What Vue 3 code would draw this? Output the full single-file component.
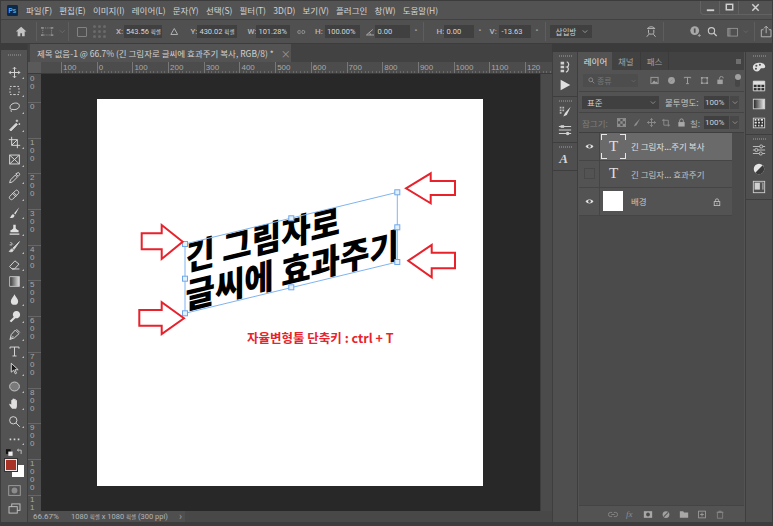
<template>
  <div class="window">
    <header class="menubar">
      <svg class="ps-logo" viewBox="0 0 12 12"><rect width="12" height="12" rx="1.5" fill="#0b2a4a" /><text x="1.6" y="9" class="ps-text">Ps</text></svg>
      <span v-for="item in menus" :key="item" class="menu-item">{{ item }}</span>
      <div class="win-buttons">
        <span class="win-btn"><svg viewBox="0 0 12 12"><rect x="2" y="8" width="8" height="2" fill="#d0d0d0" /></svg></span>
        <span class="win-btn"><svg viewBox="0 0 12 12"><rect x="2.5" y="2.5" width="7" height="6" fill="none" stroke="#d0d0d0" stroke-width="1.6" /></svg></span>
        <span class="win-btn wide"><svg viewBox="0 0 12 12"><path d="M2.5 2.5l7 7M9.5 2.5l-7 7" stroke="#d0d0d0" stroke-width="1.6" /></svg></span>
      </div>
    </header>

    <section class="options">
      <svg class="opt-home" viewBox="0 0 14 14"><path d="M7 1.5L1 7h2v5.5h3V9h2v3.5h3V7h2z" fill="#c4c4c4" /></svg>
      <i class="divider home-div"></i>
      <svg class="opt-transform" viewBox="0 0 14 12"><rect x="2" y="2" width="10" height="8" fill="none" stroke="#8a8a8a" stroke-dasharray="1.5 1" /><path d="M0 1h3v2H0zM11 1h3v2h-3zM0 9h3v2H0zM11 9h3v2h-3z" fill="#8a8a8a" /></svg>
      <svg class="opt-chev" viewBox="0 0 8 6"><path d="M1 1.5l3 3 3-3" fill="none" stroke="#6e6e6e" /></svg>
      <i class="divider"></i>
      <span class="check-box"></span>
      <span class="ref-dots"><i v-for="n in 9" :key="n"></i></span>
      <label class="opt-label x">X:</label>
      <span class="opt-input w-x">543.56 <small>픽셀</small></span>
      <svg class="opt-delta" viewBox="0 0 10 10"><path d="M5 1.5L1 8.5h8z" fill="none" stroke="#b4b4b4" stroke-width="1.1" /></svg>
      <label class="opt-label y">Y:</label>
      <span class="opt-input w-y">430.02 <small>픽셀</small></span>
      <label class="opt-label w">W:</label>
      <span class="opt-input w-w">101.28%</span>
      <svg class="opt-link" viewBox="0 0 10 6"><path d="M4 1.2H2.6a1.8 1.8 0 0 0 0 3.6H4M6 1.2h1.4a1.8 1.8 0 0 1 0 3.6H6M3 3h4" fill="none" stroke="#9a9a9a" /></svg>
      <label class="opt-label h">H:</label>
      <span class="opt-input w-h">100.00%</span>
      <svg class="opt-angle" viewBox="0 0 10 8"><path d="M0.5 7.5h9M0.5 7.5L8 1M5 7.5a4 4 0 0 0-1-3" fill="none" stroke="#b4b4b4" /></svg>
      <span class="opt-input w-a">0.00</span>
      <span class="deg">°</span>
      <i class="divider d2"></i>
      <label class="opt-label h2">H:</label>
      <span class="opt-input w-s">0.00</span>
      <span class="deg">°</span>
      <label class="opt-label v">V:</label>
      <span class="opt-input w-v">-13.63</span>
      <span class="deg">°</span>
      <i class="divider d3"></i>
      <span class="opt-select">삽입방<svg viewBox="0 0 8 6"><path d="M1 1.5l3 3 3-3" fill="none" stroke="#b0b0b0" /></svg></span>
      <svg class="opt-warp" viewBox="0 0 14 14"><path d="M3 3.5c2-2.5 6-2.5 8 0M2.5 3.5h9M4 5v3.5c0 1 1 1.5 3 1.5s3-.5 3-1.5V5M2 13l2.5-3M12 13l-2.5-3" fill="none" stroke="#b8b8b8" stroke-width="1.1" /></svg>
      <i class="divider d4"></i>
      <svg class="opt-user" viewBox="0 0 14 14"><circle cx="6.5" cy="6" r="5" fill="#a8a8a8" /><path d="M6.5 3.5v5" stroke="#535353" stroke-width="2" /><path d="M10 11.5h3.5M11.7 9.7v3.5" stroke="#a8a8a8" /></svg>
      <svg class="opt-search" viewBox="0 0 14 14"><circle cx="6" cy="6" r="4.2" fill="none" stroke="#c8c8c8" stroke-width="1.5" /><path d="M9 9l4 4" stroke="#c8c8c8" stroke-width="1.7" /></svg>
      <svg class="opt-space" viewBox="0 0 14 12"><rect x="1" y="1.5" width="12" height="9.5" fill="none" stroke="#9a9a9a" /><rect x="1" y="1.5" width="3.5" height="9.5" fill="#9a9a9a" opacity=".5" /></svg>
      <svg class="opt-chev2" viewBox="0 0 8 6"><path d="M1 1.5l3 3 3-3" fill="none" stroke="#6e6e6e" /></svg>
      <i class="divider d5"></i>
      <svg class="opt-share" viewBox="0 0 14 14"><path d="M4 5H1.5v8h11V5H10M7 9V1M4.5 3.5L7 1l2.5 2.5" fill="none" stroke="#b4b4b4" stroke-width="1.1" /></svg>
    </section>

    <main class="workspace">
      <aside class="toolbar">
        <div class="strip-top"></div>
        <div class="grip"></div>
        <div class="tool-list">
          <span v-for="tool in tools" :key="tool.name" class="tool">
            <svg viewBox="0 0 16 16"><path :d="tool.d" :fill="tool.fill || 'none'" :stroke="tool.stroke || (tool.fill ? 'none' : '#d6d6d6')" stroke-width="1.2" /></svg>
          </span>
        </div>
        <svg class="swap-icons" viewBox="0 0 20 9">
          <defs><linearGradient id="tool-grad"><stop offset="0" stop-color="#333" /><stop offset="1" stop-color="#e4e4e4" /></linearGradient></defs>
          <rect x="1" y="1" width="5" height="5" fill="#111" /><rect x="3.5" y="3.5" width="4.5" height="4.5" fill="#eee" /><path d="M13 2h4v4M13 2l1.5-1.2M13 2l1.5 1.2" fill="none" stroke="#c4c4c4" />
        </svg>
        <div class="swatches">
          <span class="swatch-bg"></span>
          <span class="swatch-fg"></span>
        </div>
        <svg class="mode-icon" viewBox="0 0 14 12"><rect x=".7" y=".7" width="12.6" height="10.6" fill="none" stroke="#a0a0a0" /><circle cx="7" cy="6" r="3.2" fill="#8c8c8c" /></svg>
        <svg class="mode-icon screen" viewBox="0 0 14 12"><rect x="4" y="1" width="9" height="7" fill="#535353" stroke="#c4c4c4" /><rect x="1" y="4" width="9" height="7" fill="#535353" stroke="#c4c4c4" /></svg>
      </aside>

      <section class="doc-area">
        <div class="tab-bar">
          <div class="tab">
            <span class="tab-title">제목 없음-1 @ 66.7% (긴 그림자로 글씨에 효과주기 복사, RGB/8) *</span>
            <span class="tab-close">×</span>
          </div>
        </div>
        <div class="h-ruler">
          <div class="ruler-corner"></div>
          <div class="h-track">
            <span v-for="n in hLabels" :key="n" class="h-cell">{{ n }}</span>
          </div>
        </div>
        <div class="doc-mid">
          <div class="v-ruler">
            <span v-for="(n, i) in vLabels" :key="i" class="v-cell" :class="{ first: i === 0 }">
              <b v-for="(c, j) in n" :key="j">{{ c }}</b>
            </span>
          </div>
          <div class="canvas">
            <div class="page">
              <svg class="artwork" viewBox="97 99 386 387">
                <g>
                  <text transform="translate(185.500 271) skewY(-13.63) scale(1 1.08)" class="headline">긴 그림자로</text>
                  <text transform="translate(185.500 309) skewY(-13.63) scale(1 1.08)" class="headline">글씨에 효과주기</text>
                </g>
                <polygon points="185,244 397.3,192.3 397.3,262 185,313.3" fill="none" stroke="#7fb4f0" stroke-width="1" />
                <rect v-for="h in handles" :key="h[0] + '-' + h[1]" :x="h[0] - 2.5" :y="h[1] - 2.5" width="5" height="5" fill="#e4f0fc" stroke="#6ea8ec" stroke-width="1" />
                <polygon v-for="a in arrows" :key="a" :points="a" fill="#fff" stroke="#e8212b" stroke-width="2" />
                <text x="247" y="343" class="note">자율변형툴 단축키 : ctrl + T</text>
              </svg>
            </div>
          </div>
          <div class="v-scroll"></div>
        </div>
        <footer class="status">
          <span class="zoom-val">66.67%</span>
          <span class="doc-size">1080 <small>픽셀</small> x 1080 <small>픽셀</small> (300 ppi)</span>
          <span class="status-arrow">›</span>
          <span class="h-scroll"></span>
        </footer>
      </section>

      <aside class="panels">
        <div class="panel-top"></div>
        <div class="panel-body">
          <div class="mini-dock">
            <div class="mini-group g1">
              <div class="grip"></div>
              <svg viewBox="0 0 16 16" class="dock-icon"><path d="M3 2h4v3H3zM3 6.500h4v3H3zM3 11h4v3H3z" fill="#d0d0d0" /><path d="M10 2c3 1 3 5 0 6 3 1 2 5-1 6" fill="none" stroke="#d0d0d0" stroke-width="1.4" /></svg>
              <svg viewBox="0 0 16 16" class="dock-icon"><path d="M3 2l11 6-11 6z" fill="#e0e0e0" /></svg>
            </div>
            <div class="mini-group g2">
              <div class="grip"></div>
              <svg viewBox="0 0 16 16" class="dock-icon"><path d="M2 2h2v2H2zM5 2h2v2H5zM2 5h2v2H2zM5 5h2v2H5zM2 8h2v2H2z" fill="#b8b8b8" /><path d="M14.500 2L8 9l-2 4 4-1.500z" fill="#dcdcdc" /></svg>
              <svg viewBox="0 0 16 16" class="dock-icon"><path d="M1 4h14M1 8h14M1 12h14" stroke="#d0d0d0" stroke-width="1.200" /><rect x="3" y="2.500" width="4" height="3" fill="#d0d0d0" /><rect x="9" y="10" width="4" height="4" rx="2" fill="#d0d0d0" /></svg>
            </div>
            <div class="mini-group g3">
              <div class="grip"></div>
              <svg viewBox="0 0 16 16" class="dock-icon"><text x="1.500" y="14" class="char-glyph">A</text></svg>
            </div>
          </div>

          <div class="layers">
            <nav class="layer-tabs">
              <span class="l-tab active">레이어</span>
              <span class="l-tab">채널</span>
              <span class="l-tab">패스</span>
              <span class="tab-menu"></span>
            </nav>
            <div class="filter-row">
              <span class="filter-box">
                <svg viewBox="0 0 10 10"><circle cx="4" cy="4" r="2.800" fill="none" stroke="#999" /><path d="M6 6l3 3" stroke="#999" /></svg>
                종류
                <svg class="f-chev" viewBox="0 0 8 6"><path d="M1 1.500l3 3 3-3" fill="none" stroke="#6e6e6e" /></svg>
              </span>
              <span class="filter-icons">
                <svg viewBox="0 0 10 10"><rect x="1" y="1.500" width="8" height="7" fill="none" stroke="#a0a0a0" /><path d="M2 8l2.500-3 2 2 1-1 1 2z" fill="#a0a0a0" /></svg>
                <svg viewBox="0 0 10 10"><circle cx="5" cy="5" r="3.800" fill="#a0a0a0" /><path d="M5 5L8 2.500 2 8z" fill="#535353" /></svg>
                <svg viewBox="0 0 10 10"><path d="M1.500 2.500V1.500h7v1M5 1.500v7M3.500 8.500h3" fill="none" stroke="#a0a0a0" stroke-width="1.100" /></svg>
                <svg viewBox="0 0 10 10"><rect x="2" y="2" width="6" height="6" fill="none" stroke="#a0a0a0" /><path d="M1 1h2v2H1zM7 1h2v2H7zM1 7h2v2H1zM7 7h2v2H7z" fill="#a0a0a0" /></svg>
                <svg viewBox="0 0 10 10"><rect x="1.500" y="4" width="6" height="5" fill="#a0a0a0" /><path d="M4 4V2.500a2 2 0 0 1 4 0" fill="none" stroke="#a0a0a0" /></svg>
              </span>
              <span class="filter-toggle"><i></i></span>
            </div>
            <div class="blend-row">
              <span class="blend-box">표준<svg viewBox="0 0 8 6"><path d="M1 1.500l3 3 3-3" fill="none" stroke="#a0a0a0" /></svg></span>
              <span class="row-label">불투명도:</span>
              <span class="num-box">100%</span>
              <span class="num-drop"><svg viewBox="0 0 8 6"><path d="M1 1.500l3 3 3-3" fill="none" stroke="#a0a0a0" /></svg></span>
            </div>
            <div class="lock-row">
              <span class="row-label dim">잠그기:</span>
              <span class="lock-icons">
                <svg viewBox="0 0 10 10"><path d="M1 1h2.700v2.700H1zM6.300 1H9v2.700H6.300zM3.700 3.700h2.600v2.600H3.700zM1 6.300h2.700V9H1zM6.300 6.300H9V9H6.300z" fill="#8e8e8e" /><rect x=".5" y=".5" width="9" height="9" fill="none" stroke="#8e8e8e" /></svg>
                <svg viewBox="0 0 10 10"><path d="M9 .5L3.500 6.500 2 9.500 5 8z" fill="#8e8e8e" /></svg>
                <svg viewBox="0 0 10 10"><path d="M5 .5v9M.5 5h9M3.500 2L5 .5 6.500 2M3.500 8L5 9.500 6.500 8M2 3.500L.5 5 2 6.500M8 3.500L9.500 5 8 6.500" fill="none" stroke="#8e8e8e" /></svg>
                <svg viewBox="0 0 10 10"><path d="M2 1v7h7M0 2.500h7v7" fill="none" stroke="#8e8e8e" /></svg>
                <svg viewBox="0 0 10 10"><rect x="1.500" y="4.500" width="7" height="5" fill="#a8a8a8" /><path d="M3 4.500V3a2 2 0 0 1 4 0v1.500" fill="none" stroke="#a8a8a8" /></svg>
              </span>
              <span class="row-label fill">칠:</span>
              <span class="num-box">100%</span>
              <span class="num-drop"><svg viewBox="0 0 8 6"><path d="M1 1.500l3 3 3-3" fill="none" stroke="#a0a0a0" /></svg></span>
            </div>

            <div class="layer-list">
              <div class="layer-rows">
                <div class="layer-row selected">
                  <span class="eye-col"><svg viewBox="0 0 10 8"><path d="M.5 4C2.500 1 7.500 1 9.500 4 7.500 7 2.500 7 .5 4z" fill="#e0e0e0" /><circle cx="5" cy="4" r="1.600" fill="#555" /></svg></span>
                  <span class="thumb-t framed">T</span>
                  <span class="layer-name">긴 그림자...주기 복사</span>
                </div>
                <div class="layer-row">
                  <span class="eye-col"><i class="eye-off"></i></span>
                  <span class="thumb-t">T</span>
                  <span class="layer-name">긴 그림자... 효과주기</span>
                </div>
                <div class="layer-row">
                  <span class="eye-col"><svg viewBox="0 0 10 8"><path d="M.5 4C2.500 1 7.500 1 9.500 4 7.500 7 2.500 7 .5 4z" fill="#e0e0e0" /><circle cx="5" cy="4" r="1.600" fill="#555" /></svg></span>
                  <span class="thumb-white"></span>
                  <span class="layer-name">배경</span>
                  <svg class="layer-lock" viewBox="0 0 10 10"><rect x="1.500" y="4.500" width="7" height="5" fill="none" stroke="#c8c8c8" /><path d="M3 4.500V3a2 2 0 0 1 4 0v1.500M5 6v2" fill="none" stroke="#c8c8c8" /></svg>
                </div>
              </div>
            </div>

            <div class="layer-foot">
              <svg viewBox="0 0 12 8"><path d="M5 1.500H3a2.500 2.500 0 0 0 0 5h2M7 1.500h2a2.500 2.500 0 0 1 0 5H7M4 4h4" fill="none" stroke="#8e8e8e" /></svg>
              <span class="fx">fx</span>
              <svg viewBox="0 0 12 10"><rect x="1" y="1" width="10" height="8" fill="#a8a8a8" /><circle cx="6" cy="5" r="2.300" fill="#4a4a4a" /></svg>
              <svg viewBox="0 0 12 12"><circle cx="6" cy="6" r="4.500" fill="#a0a0a0" /><path d="M3 9l6-6" stroke="#4a4a4a" stroke-width="1.400" /></svg>
              <svg viewBox="0 0 12 10"><path d="M1 1h4l1 1.500h5V9H1z" fill="#a8a8a8" /></svg>
              <svg viewBox="0 0 12 12"><rect x="1.500" y="1.500" width="9" height="9" fill="none" stroke="#a8a8a8" /><path d="M6 3.500v5M3.500 6h5" stroke="#a8a8a8" /></svg>
              <svg viewBox="0 0 12 12"><path d="M2.500 3h7v8h-7zM4.500 3V1.500h3V3" fill="none" stroke="#8e8e8e" /><path d="M1.500 3h9" stroke="#8e8e8e" /></svg>
            </div>
          </div>

          <div class="right-dock">
            <div class="mini-group r1">
              <div class="grip"></div>
              <svg viewBox="0 0 16 16" class="dock-icon"><path d="M1 8.500C1 4.500 5 3 9 3c4 0 6.500 2.500 6 5-.5 2-3 1-4.500 1.500S9 13 6 13c-3 0-5-2-5-4.500z" fill="#e0e0e0" /><circle cx="5" cy="6.500" r="1.200" fill="#535353" /><circle cx="9" cy="5.500" r="1.200" fill="#535353" /><circle cx="4.500" cy="10" r="1.200" fill="#535353" /></svg>
              <svg viewBox="0 0 16 16" class="dock-icon"><path d="M1.500 2.500h13v11h-13z" fill="#2e2e2e" /><path d="M1.500 2.500h13v11h-13zM1.500 6h13M1.500 9.800h13M5.800 6v7.500M10.200 6v7.500" fill="none" stroke="#e0e0e0" /><rect x="1.500" y="2.500" width="13" height="3.500" fill="#e0e0e0" /></svg>
              <svg viewBox="0 0 16 16" class="dock-icon"><defs><linearGradient id="gr-panel"><stop offset="0" stop-color="#222" /><stop offset="1" stop-color="#eee" /></linearGradient></defs><rect x="1.500" y="2.500" width="13" height="11" fill="url(#gr-panel)" stroke="#d0d0d0" /></svg>
              <svg viewBox="0 0 16 16" class="dock-icon"><rect x="1.500" y="2.500" width="13" height="11" fill="#2e2e2e" stroke="#d0d0d0" /><path d="M3 4.500h2M6.500 4.500h2M10 4.500h2.500M3 7.500h2.500M7 7.500h2M11 7.500h1.500M3 11h2M7 11h1.500M10 11h2.500" stroke="#e4e4e4" stroke-width="2" /></svg>
            </div>
            <div class="mini-group r2">
              <div class="grip"></div>
              <svg viewBox="0 0 16 16" class="dock-icon"><path d="M1 4h14M1 8h14M1 12h14" stroke="#c8c8c8" /><circle cx="10.500" cy="4" r="1.800" fill="#535353" stroke="#c8c8c8" /><circle cx="5" cy="8" r="1.800" fill="#535353" stroke="#c8c8c8" /><circle cx="10" cy="12" r="1.800" fill="#535353" stroke="#c8c8c8" /></svg>
              <svg viewBox="0 0 16 16" class="dock-icon"><circle cx="8" cy="8" r="6" fill="#e6e6e6" /><path d="M12.200 3.700A6 6 0 0 1 3.700 12.200z" fill="#3a3a3a" /></svg>
              <svg viewBox="0 0 16 16" class="dock-icon"><rect x="1.500" y="1.500" width="13" height="13" fill="none" stroke="#d0d0d0" /><rect x="3" y="3" width="10" height="8" fill="#d0d0d0" /><rect x="9" y="3" width="3" height="9" fill="#535353" /></svg>
            </div>
          </div>
        </div>
      </aside>
    </main>
  </div>
</template>

<script setup>
const menus = ['파일(F)', '편집(E)', '이미지(I)', '레이어(L)', '문자(Y)', '선택(S)', '필터(T)', '3D(D)', '보기(V)', '플러그인', '창(W)', '도움말(H)']

const hLabels = ['100', '0', '100', '200', '300', '400', '500', '600', '700', '800', '900', '1000', '1100', '120']
const vLabels = ['00', '0', '100', '200', '300', '400', '500', '600', '700', '800', '900', '1000', '11']

const handles = [[185, 244], [291.3, 218.3], [397.3, 192.3], [397.3, 227.3], [397.3, 262], [291.3, 287.3], [185, 313.3], [185, 278.7]]

const arrows = [
  '406,188.3 430.7,173.3 430.7,181 455,181 455,195 430.7,195 430.7,203.3',
  '408.3,260.7 431.7,245 431.7,252.7 455,252.7 455,268.3 431.7,268.3 431.7,277.3',
  '182.7,241.7 161.7,225 161.7,233.3 141.7,233.3 141.7,249.3 161.7,249.3 161.7,259',
  '184,318.3 161.7,302.3 161.7,310 139.3,310 139.3,325.7 161.7,325.7 161.7,334'
]

// tool icons, drawn on a 16 box
const tools = [
  { name: 'move', d: 'M8 1.500v13M1.500 8h13M6 3.500L8 1.500l2 2M6 12.500l2 2 2-2M3.500 6l-2 2 2 2M12.500 6l2 2-2 2' },
  { name: 'marquee', d: 'M2.500 3h2M6.500 3h3M11.500 3h2M13.500 5v2M13.500 9v2M13.500 13h-2M9.500 13h-3M4.500 13h-2M2.500 11V9M2.500 7V5' },
  { name: 'lasso', d: 'M3 10C1 6 5 2.500 9.500 2.500S15 6 13 8.500 6 11 4.500 10M4.500 10c-1 1-1 2.500 0 3.500' },
  { name: 'wand', d: 'M2 14.500l8-8 1.500 1.500-8 8zM11 2v3M9.500 3.500h3M14 6.500v2M13 7.500h2', fill: '#d6d6d6', stroke: '#d6d6d6' },
  { name: 'crop', d: 'M4.500 1v10.500H15M1 4.500h10.500V15M4.500 11.500l7-7' },
  { name: 'frame', d: 'M2 2.500h12v11H2zM2 2.500l12 11M14 2.500l-12 11' },
  { name: 'eyedropper', d: 'M2 14.500l1-3.500 6-6 2.500 2.500-6 6zM9.500 3.500l3 3 1.500-1.500c1-1 0-3-1.500-3z' },
  { name: 'healing', d: 'M2 10.500L9.500 3c1.500-1.500 4.500 1.500 3.500 3.500L5.500 14c-1.500 1.500-5-1.500-3.500-3.500zM5 6l5 5M7 5.500l3.500 3.500' },
  { name: 'brush', d: 'M14 1.500L7.500 9 9 10.500zM6.500 10C4 10 4.500 13 2 14c3 1.500 6 .5 6-2.500z', fill: '#e0e0e0' },
  { name: 'stamp', d: 'M6.500 2h3v4c0 1.500 2 2 3.500 3v2.500H3V9c1.500-1 3.500-1.500 3.500-3zM2 13h12v1.500H2z', fill: '#e0e0e0' },
  { name: 'history', d: 'M14 2L6 10l1.500 1.500zM5 11c-2 0-2 2-3.500 3 2.500 1 5 .5 5-2zM3 2.500l3 3M2 6h3', fill: '#e0e0e0', stroke: '#d0d0d0' },
  { name: 'eraser', d: 'M2 10.500l6.500-7 5 4-5.500 6H5zM5 13.500h9' },
  { name: 'gradient', d: 'M2 2h12v12H2z', fill: 'url(#tool-grad)', stroke: '#c0c0c0' },
  { name: 'blur', d: 'M8 1.500C7 4.500 3.500 7 3.500 10a4.500 4.500 0 0 0 9 0C12.500 7 9 4.500 8 1.500z', fill: '#e0e0e0' },
  { name: 'dodge', d: 'M6 6.500a4.500 4.500 0 1 1 3 3.500L4 15l-2-1.500 5-5z', fill: '#e0e0e0' },
  { name: 'pen', d: 'M2.500 14l1.500-6 5-5.500 4.500 4.500-5.500 5zM2.500 14l4-4M10.500 1.500l4 4' },
  { name: 'type', d: 'M2.500 4.500V2.500h11v2M8 2.500v11M5.500 13.500h5' },
  { name: 'path', d: 'M4 1.500v11l3-2.500 2 4.500 1.500-.7-2-4.300h4z', fill: '#1a1a1a', stroke: '#d8d8d8' },
  { name: 'ellipse', d: 'M2 8a6 5.500 0 1 0 12 0A6 5.500 0 1 0 2 8z', fill: '#7a7a7a', stroke: '#c8c8c8' },
  { name: 'hand', d: 'M5 14.500C3 12 2 10.500 1.500 9c.5-1 1.500-.5 2.500.5V4c.5-1 1.500-1 1.500 0v2.500-4c.5-1 1.500-1 2 0v4-3.500c.5-1 1.500-1 2 0V7V4.500c.5-1 1.500-1 1.500 0V11c0 1.500-.5 2.500-1 3.500z', fill: '#e0e0e0' },
  { name: 'zoom', d: 'M2 6.500a4.500 4.500 0 1 0 9 0 4.500 4.500 0 1 0-9 0zM10 10l4.500 4.500' },
  { name: 'more', d: 'M2 8h2v2H2zM7 8h2v2H7zM12 8h2v2h-2z', fill: '#d6d6d6' }
]
</script>

<style scoped>
.window {
  width: 773px;
  height: 526px;
  box-sizing: border-box;
  display: flex;
  flex-direction: column;
  overflow: hidden;
  background: #535353;
  border: 1px solid #3c3c3c;
  border-bottom-width: 4px;
  font-family: "Noto Sans CJK KR", "Noto Sans", sans-serif;
  color: #cfcfcf;
}

.menubar {
  height: 18px;
  display: flex;
  align-items: center;
  font-size: 8.500px;
  flex: none;
}
.ps-logo { width: 11px; height: 11px; margin-left: 6px; margin-right: 8px; }
.ps-text { font: bold 7px "Liberation Sans", sans-serif; fill: #4aa8f0; }
.menu-item { margin-right: 7.200px; white-space: nowrap; color: #d4d4d4; }
.win-buttons {
  margin-left: auto;
  height: 13px;
  align-self: flex-start;
  display: flex;
  border: 1px solid #626262;
  border-top: 0;
  border-right: 0;
  border-radius: 0 0 0 4px;
}
.win-btn { width: 18px; display: flex; align-items: center; justify-content: center; border-left: 1px solid #626262; }
.win-btn:first-child { border-left: 0; }
.win-btn.wide { width: 33px; }
.win-btn svg { width: 11px; height: 11px; }

.options {
  height: 25px;
  flex: none;
  box-sizing: border-box;
  display: flex;
  align-items: center;
  border-top: 1px solid #414141;
  border-bottom: 1px solid #3c3c3c;
  font-size: 7.500px;
  background: #505050;
  font-family: "Roboto", "Noto Sans CJK KR", sans-serif;
}
.divider { width: 1px; height: 19px; background: #5e5e5e; flex: none; margin-left: 6px; margin-right: 7px; }
.opt-home { width: 13px; height: 13px; margin-left: 14px; }
.home-div { margin-left: 9px; margin-right: 4px; }
.opt-transform { width: 13px; height: 11px; }
.opt-chev { width: 7px; height: 5px; margin-left: 5px; }
.opt-chev + .divider { margin-left: 3px; margin-right: 8px; }
.check-box { width: 8px; height: 8px; border: 1px solid #828282; border-radius: 1px; }
.ref-dots { width: 13px; display: grid; grid-template-columns: repeat(3, 3px); gap: 2px; margin-left: 6px; }
.ref-dots i { width: 3px; height: 3px; background: #6a6a6a; border-radius: 50%; }
.opt-label { color: #b8b8b8; font-weight: 500; font-size: 8px; flex: none; }
.opt-label.x { margin-left: 10px; width: 8px; }
.opt-label.y { margin-left: 12px; width: 7px; }
.opt-label.w { margin-left: 10px; width: 9px; }
.opt-label.h { margin-left: 9px; width: 10px; }
.opt-label.h2 { width: 8px; }
.opt-label.v { margin-left: 5px; width: 10px; }
.opt-input {
  height: 13px;
  line-height: 13px;
  box-sizing: border-box;
  background: #404040;
  padding-left: 2px;
  color: #d6d6d6;
  white-space: nowrap;
  flex: none;
}
.opt-input small { font-size: 5.500px; }
.w-x { width: 38px; }
.w-y { width: 40px; }
.w-w { width: 34px; }
.w-h { width: 35px; }
.w-a { width: 35px; margin-left: 1px; }
.w-s { width: 30px; }
.w-v { width: 32px; }
.opt-delta { width: 9px; height: 9px; margin-left: 8px; }
.opt-link { width: 9px; height: 6px; margin-left: 7px; }
.opt-angle { width: 9px; height: 8px; margin-left: 6px; }
.deg { width: 6px; margin-left: 4px; color: #bdbdbd; flex: none; }
.d2 { margin-left: 3px; margin-right: 12px; }
.d3 { margin-left: 4px; margin-right: 4px; }
.opt-select {
  width: 42px;
  height: 13px;
  box-sizing: border-box;
  padding-left: 5px;
  background: #404040;
  display: flex;
  align-items: center;
  justify-content: space-between;
  padding-right: 4px;
  font-family: "Noto Sans CJK KR", sans-serif;
  flex: none;
}
.opt-select svg { width: 6px; height: 5px; }
.opt-warp { width: 13px; height: 13px; margin-left: 53px; }
.d4 { margin-left: 5px; margin-right: 25px; }
.opt-user { width: 13px; height: 13px; }
.opt-search { width: 11px; height: 11px; margin-left: 6px; }
.opt-space { width: 12px; height: 10px; margin-left: 9px; }
.opt-chev2 { width: 6px; height: 5px; margin-left: 5px; }
.d5 { margin-left: 5px; margin-right: 5px; }
.opt-share { width: 13px; height: 13px; }

.workspace { flex: 1; min-height: 0; display: flex; }

.toolbar {
  width: 27px;
  flex: none;
  display: flex;
  flex-direction: column;
  align-items: center;
  background: #535353;
  border-right: 1px solid #3e3e3e;
  box-sizing: border-box;
}
.strip-top { width: 100%; height: 6px; background: #3c3c3c; flex: none; }
.grip {
  height: 2px;
  width: 13px;
  margin: 4px auto 3px;
  flex: none;
  background: repeating-linear-gradient(90deg, #777 0 1px, transparent 1px 2px);
}
.tool-list { display: flex; flex-direction: column; margin-top: 5px; flex: none; }
.tool { width: 22px; height: 17.430px; display: flex; align-items: center; justify-content: center; position: relative; }
.tool svg { width: 13px; height: 13px; }
.tool::after {
  content: "";
  position: absolute;
  right: 1px;
  bottom: 2px;
  border-right: 2px solid #bbb;
  border-top: 2px solid transparent;
}
.swap-icons { width: 19px; height: 9px; margin-top: 1px; flex: none; }
.swatches { width: 19px; height: 18px; position: relative; margin-top: 2px; flex: none; }
.swatch-fg { position: absolute; left: 0; top: 0; width: 10px; height: 10px; background: #a93226; border: 1px solid #e8e8e8; box-shadow: 0 0 0 1px #333; }
.swatch-bg { position: absolute; right: 0; bottom: 0; width: 12px; height: 12px; background: #fff; }
.mode-icon { width: 13px; height: 11px; margin-top: 7.500px; flex: none; }
.mode-icon.screen { margin-top: 7px; }

.doc-area { width: 524px; flex: none; display: flex; flex-direction: column; min-height: 0; }
.tab-bar { height: 18px; background: #424242; flex: none; display: flex; }
.tab {
  width: 261px;
  margin-left: 2px;
  background: #535353;
  display: flex;
  align-items: center;
  padding-left: 7px;
  box-sizing: border-box;
  font-size: 8.500px;
  white-space: nowrap;
  color: #d0d0d0;
}
.tab-close { margin-left: 7px; color: #999; font-size: 10px; }

.h-ruler { height: 11px; flex: none; display: flex; background: #4c4c4c; border-bottom: 1px solid #3a3a3a; }
.ruler-corner { width: 13px; background: #5a5a5a; flex: none; }
.h-track { flex: 1; display: flex; overflow: hidden; padding-left: 20px; font-size: 8px; line-height: 11px; color: #a8a8a8; font-family: "Liberation Sans", sans-serif; }
.h-cell {
  width: 35.700px;
  flex: none;
  padding-left: 2px;
  box-sizing: border-box;
  background:
    linear-gradient(#777, #777) 0 0 / 1px 100% no-repeat,
    repeating-linear-gradient(90deg, #6a6a6a 0 1px, transparent 1px 3.570px) 0 100% / 100% 2px no-repeat;
}

.doc-mid { flex: 1; min-height: 0; display: flex; }
.v-ruler {
  width: 13px;
  flex: none;
  background: #4c4c4c;
  overflow: hidden;
  display: flex;
  flex-direction: column;
  font: 8px/8px "Liberation Sans", sans-serif;
  color: #a8a8a8;
}
.v-cell {
  height: 35.700px;
  flex: none;
  box-sizing: border-box;
  padding: 0 0 0 2px;
  display: flex;
  flex-direction: column;
  border-top: 1px solid #666;
}
.v-cell.first { height: 28px; padding-top: 1px; border-top: 0; }
.v-cell b { font-weight: 400; height: 8px; }

.canvas { width: 499px; flex: none; background: #282828; overflow: hidden; }
.page { width: 386px; height: 387px; margin: 25px 0 0 56px; background: #fff; position: relative; }
.artwork { position: absolute; inset: 0; width: 386px; height: 387px; }
.headline { font: 900 32px "Noto Sans CJK KR", sans-serif; fill: #000; }
.note { font: 700 12.500px "Noto Sans CJK KR", sans-serif; fill: #e8232c; }
.v-scroll { flex: 1; background: #4b4b4b; border-left: 1px solid #3e3e3e; }

.status {
  height: 11px;
  flex: none;
  display: flex;
  align-items: center;
  font-size: 8px;
  background: #4f4f4f;
  font-family: "Roboto", "Noto Sans CJK KR", sans-serif;
  color: #b4b4b4;
}
.zoom-val { width: 43px; padding-left: 5px; box-sizing: border-box; flex: none; }
.doc-size { width: 108px; font-size: 7.500px; white-space: nowrap; flex: none; }
.doc-size small { font-size: 5.500px; }
.status-arrow { font-size: 10px; line-height: 11px; color: #999; width: 6px; flex: none; }
.h-scroll { flex: 1; height: 100%; background: #484848; }

.panels { flex: 1; min-width: 0; display: flex; flex-direction: column; }
.panel-top { height: 8px; background: #3b3b3b; flex: none; }
.panel-body { flex: 1; min-height: 0; display: flex; gap: 1px; }

.mini-dock {
  width: 24px;
  flex: none;
  background: #4f4f4f;
  border-left: 1px solid #3e3e3e;
  border-right: 1px solid #3e3e3e;
}
.mini-group { display: flex; flex-direction: column; align-items: center; border-bottom: 1px solid #3e3e3e; box-sizing: border-box; }
.mini-group .grip { margin: 3px auto 3px; }
.dock-icon { width: 14px; height: 14px; margin-bottom: 4px; flex: none; }
.char-glyph { font: italic bold 15px "Liberation Serif", serif; fill: #d6d6d6; }
.g1 { height: 45px; }
.g2 { height: 46px; }
.g3 { height: 28px; }

.layers { width: 165px; flex: none; display: flex; flex-direction: column; background: #4b4b4b; }
.layer-tabs { height: 18px; flex: none; display: flex; background: #424242; font-size: 8.500px; align-items: stretch; }
.l-tab { padding: 0 6px; display: flex; align-items: center; color: #a4a4a4; border-right: 1px solid #3b3b3b; }
.l-tab.active { background: #535353; color: #e0e0e0; width: 33px; padding: 0; justify-content: center; border: 0; }
.tab-menu { width: 5px; height: 5px; background: #6e6e6e; margin: 7px 3px 0 auto; }

.filter-row { height: 22px; flex: none; background: #535353; display: flex; align-items: center; padding-left: 4px; border-bottom: 1px solid #444; box-sizing: border-box; }
.filter-box {
  width: 55px;
  height: 13px;
  display: flex;
  align-items: center;
  background: #4d4d4d;
  font-size: 8px;
  color: #787878;
  gap: 2px;
  padding-left: 5px;
  box-sizing: border-box;
}
.filter-box svg { width: 7px; height: 7px; }
.filter-box .f-chev { margin-left: auto; margin-right: 2px; width: 5px; height: 4px; }
.filter-icons { display: flex; gap: 7.500px; margin-left: 12px; }
.filter-icons svg { width: 9px; height: 9px; }
.filter-toggle { width: 5px; height: 12px; background: #464646; border-radius: 3px; margin-left: 10px; position: relative; }
.filter-toggle i { position: absolute; left: -0.500px; top: -1px; width: 6px; height: 6px; background: #a0a0a0; border-radius: 50%; }

.blend-row, .lock-row { flex: none; display: flex; align-items: center; background: #535353; padding-left: 3px; box-sizing: border-box; font-size: 8.500px; }
.blend-row { height: 21px; border-bottom: 1px solid #444; }
.lock-row { height: 20px; border-bottom: 1px solid #3f3f3f; }
.blend-box {
  width: 77px;
  height: 13px;
  background: #404040;
  display: flex;
  align-items: center;
  justify-content: space-between;
  padding: 0 3px 0 5px;
  box-sizing: border-box;
  margin-right: 6px;
  color: #d0d0d0;
}
.blend-box svg, .num-drop svg { width: 6px; height: 5px; }
.row-label { color: #c4c4c4; white-space: nowrap; width: 39px; flex: none; }
.row-label.dim { color: #7e7e7e; width: 33px; }
.row-label.fill { width: 11px; margin-left: 4px; margin-right: 3px; color: #b0b0b0; }
.num-box { width: 25px; height: 13px; line-height: 13px; background: #404040; padding-left: 1px; box-sizing: border-box; font-family: "Roboto", sans-serif; font-size: 8px; color: #d0d0d0; flex: none; }
.num-drop { width: 9px; height: 13px; background: #484848; display: flex; align-items: center; justify-content: center; margin-left: 1px; flex: none; }
.lock-icons { display: flex; gap: 6px; margin-left: 2px; }
.lock-icons svg { width: 9px; height: 9px; }

.layer-list { flex: 1; min-height: 0; background: #4b4b4b; }
.layer-rows { width: 153px; }
.layer-row { height: 27.500px; display: flex; align-items: center; border-bottom: 1px solid #454545; box-sizing: border-box; background: #535353; font-size: 8.500px; color: #c4c4c4; position: relative; }
.layer-row.selected { background: linear-gradient(90deg, #535353 0 21px, #6a6a6a 21px); color: #e0e0e0; }
.eye-col { width: 21px; height: 100%; display: flex; align-items: center; justify-content: center; border-right: 1px solid #454545; box-sizing: border-box; flex: none; }
.eye-col svg { width: 9px; height: 7px; }
.eye-off { width: 9px; height: 9px; border: 1px solid #484848; display: block; }
.thumb-t { width: 25px; height: 25px; margin-left: 1px; display: flex; align-items: center; justify-content: center; font: 15px "Liberation Serif", serif; color: #e0e0e0; flex: none; }
.thumb-t.framed {
  background:
    linear-gradient(#e8e8e8, #e8e8e8) 0 0 / 6px 1px no-repeat,
    linear-gradient(#e8e8e8, #e8e8e8) 0 0 / 1px 6px no-repeat,
    linear-gradient(#e8e8e8, #e8e8e8) 100% 0 / 6px 1px no-repeat,
    linear-gradient(#e8e8e8, #e8e8e8) 100% 0 / 1px 6px no-repeat,
    linear-gradient(#e8e8e8, #e8e8e8) 0 100% / 6px 1px no-repeat,
    linear-gradient(#e8e8e8, #e8e8e8) 0 100% / 1px 6px no-repeat,
    linear-gradient(#e8e8e8, #e8e8e8) 100% 100% / 6px 1px no-repeat,
    linear-gradient(#e8e8e8, #e8e8e8) 100% 100% / 1px 6px no-repeat;
}
.thumb-white { width: 20px; height: 20px; margin-left: 3px; margin-right: 3px; background: #fff; flex: none; }
.layer-name { margin-left: 5px; white-space: nowrap; }
.layer-lock { width: 8px; height: 8px; position: absolute; right: 11px; top: 10px; }

.layer-foot { height: 17px; flex: none; background: #535353; display: flex; align-items: center; justify-content: flex-end; gap: 8px; padding-right: 19px; border-top: 1px solid #444; box-sizing: border-box; }
.layer-foot svg { width: 10px; height: 9px; }
.fx { font: italic 9px "Liberation Serif", serif; color: #8e8e8e; width: 9px; }

.right-dock { flex: 1; background: #4f4f4f; border-left: 1px solid #3e3e3e; }
.right-dock .dock-icon { margin-bottom: 4.500px; }
.r1 { height: 83px; }
.r2 { height: 65px; }
</style>

<style>
html, body { margin: 0; background: #535353; }
</style>
